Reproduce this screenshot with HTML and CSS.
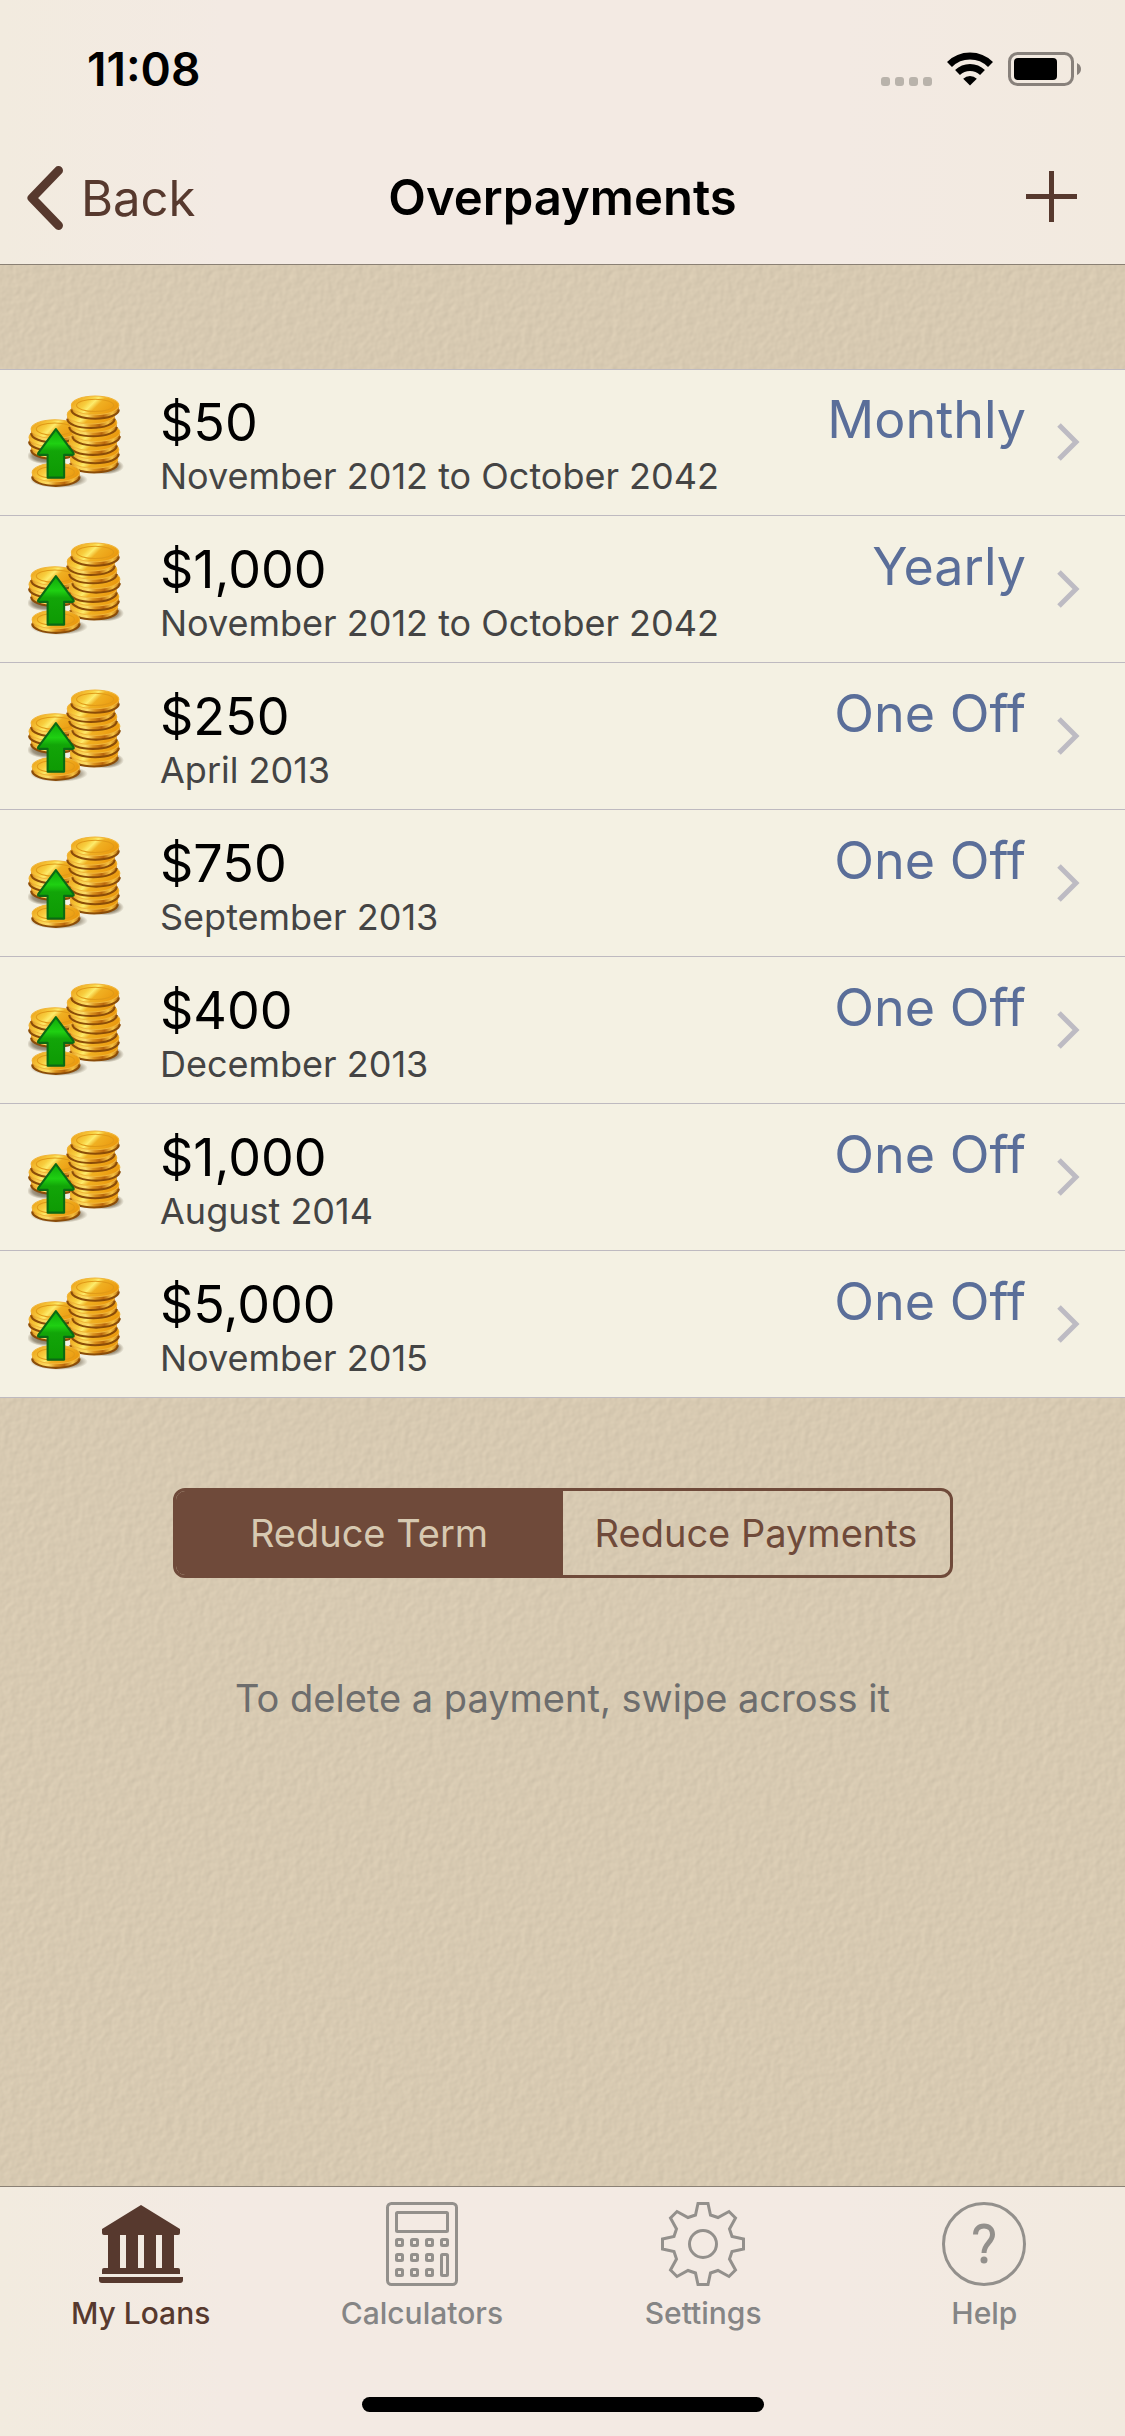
FILE: index.html
```html
<!DOCTYPE html>
<html lang="en">
<head>
<meta charset="utf-8">
<meta name="viewport" content="width=device-width, initial-scale=1">
<title>Overpayments</title>
<link rel="stylesheet" href="styles.css">
</head>
<body>
<svg class="defs" width="0" height="0" aria-hidden="true">
  <defs>
    <linearGradient id="edge" x1="0" x2="1" y1="0" y2="0">
      <stop offset="0" stop-color="#d98a14"/><stop offset=".16" stop-color="#f9cf4c"/><stop offset=".34" stop-color="#fbdc68"/>
      <stop offset=".5" stop-color="#dc921c"/><stop offset=".68" stop-color="#b8660c"/><stop offset=".86" stop-color="#f7c544"/><stop offset="1" stop-color="#b8680a"/>
    </linearGradient>
    <linearGradient id="face" x1="0" x2="1" y1=".3" y2=".7">
      <stop offset="0" stop-color="#eda31c"/><stop offset=".3" stop-color="#f8ce3e"/><stop offset=".42" stop-color="#fdec6c"/>
      <stop offset=".55" stop-color="#f0b022"/><stop offset="1" stop-color="#ea960c"/>
    </linearGradient>
    <linearGradient id="arrow" x1="0" x2="0" y1="0" y2="1">
      <stop offset="0" stop-color="#0fa808"/><stop offset=".3" stop-color="#1fd012"/><stop offset=".45" stop-color="#12a508"/><stop offset="1" stop-color="#0e9a04"/>
    </linearGradient>
    <radialGradient id="shade">
      <stop offset="0" stop-color="#4a3a20" stop-opacity=".8"/><stop offset=".7" stop-color="#4a3a20" stop-opacity=".5"/><stop offset="1" stop-color="#4a3a20" stop-opacity="0"/>
    </radialGradient>
    <g id="coin">
      <path d="M0 8v5c0 5 10 9 23 9s23-4 23-9V8z" fill="url(#edge)"/>
      <path d="M0 13c0 5 10 9 23 9s23-4 23-9" fill="none" stroke="#8a4c08" stroke-width="2"/>
      <ellipse cx="23" cy="9" rx="23" ry="9" fill="url(#face)" stroke="#f0b63a" stroke-width="1"/>
    </g>
    <symbol id="coins" viewBox="2 1 93 93">
      <ellipse cx="77" cy="71" rx="18" ry="8" fill="url(#shade)"/>
      <ellipse cx="19" cy="61" rx="18" ry="8" fill="url(#shade)"/>
      <ellipse cx="32" cy="84" rx="28" ry="8" fill="url(#shade)"/>
      <use href="#coin" x="5" y="42"/><use href="#coin" x="3" y="34"/><use href="#coin" x="5" y="26"/>
      <ellipse cx="28" cy="35" rx="18" ry="6" fill="none" stroke="#e09a18" stroke-width="1"/>
      <use href="#coin" x="43" y="55"/><use href="#coin" x="44" y="46"/><use href="#coin" x="42" y="38"/><use href="#coin" x="45" y="29"/>
      <use href="#coin" x="42" y="20"/><use href="#coin" x="40" y="12"/><use href="#coin" x="44" y="3"/>
      <ellipse cx="67" cy="12" rx="18" ry="6" fill="none" stroke="#e09a18" stroke-width="1"/>
      <use href="#coin" x="6" y="68"/>
      <ellipse cx="29" cy="77" rx="18" ry="6" fill="none" stroke="#e09a18" stroke-width="1"/>
      <path d="M29 35 46 58q1 2-1 2H37V82H21V60H13q-2 0-1-2z" fill="url(#arrow)" stroke="#0a6a14" stroke-width="2" stroke-linejoin="round"/>
    </symbol>
    <symbol id="more" viewBox="0 0 26 40">
      <path d="M3 3 20 20 3 37" fill="none" stroke="#bdbbc3" stroke-width="5"/>
    </symbol>
  </defs>
</svg>

<div class="screen">
  <header class="top">
    <div class="status">
      <time class="clock">11:08</time>
      <div class="indicators">
        <svg class="signal" viewBox="0 0 51 9" aria-hidden="true"><g fill="#b9b3ab"><rect width="9" height="9" rx="3"/><rect x="14" width="9" height="9" rx="3"/><rect x="28" width="9" height="9" rx="3"/><rect x="42" width="9" height="9" rx="3"/></g></svg>
        <svg class="wifi" viewBox="0 0 46 34" aria-hidden="true"><g fill="none" stroke="#000" stroke-width="7"><path d="M2.500 12.500a29 29 0 0 1 41 0"/><path d="M10.500 20.500a18 18 0 0 1 25 0"/></g><path d="M23 33.500 16.200 26.700a9.800 9.800 0 0 1 13.600 0z"/></svg>
        <svg class="battery" viewBox="0 0 74 34" aria-hidden="true"><rect x="1.500" y="1.500" width="63" height="31" rx="8" fill="none" stroke="#88817b" stroke-width="3"/><rect x="6" y="6" width="43" height="22" rx="4"/><path d="M69 11v12q4-2 4-6t-4-6z" fill="#88817b"/></svg>
      </div>
    </div>
    <nav class="bar">
      <a class="back" href="#back"><svg class="back-icon" viewBox="0 0 36 64" aria-hidden="true"><path d="M31.500 4.500 5 32 31.500 59.500" fill="none" stroke="#57392e" stroke-width="9" stroke-linecap="round" stroke-linejoin="round"/></svg>Back</a>
      <h1 class="title">Overpayments</h1>
      <button class="add" type="button" aria-label="Add overpayment"><svg class="add-icon" viewBox="0 0 51 51" aria-hidden="true"><path d="M0 25.500h51M25.500 0v51" stroke="#57392e" stroke-width="5"/></svg></button>
    </nav>
  </header>

  <main class="content">
    <ul class="payments">
      <li><a class="payment" href="#p1"><svg class="coins"><use href="#coins"/></svg><span class="info"><span class="amount">$50</span><span class="dates">November 2012 to October 2042</span></span><span class="kind">Monthly</span><svg class="more"><use href="#more"/></svg></a></li>
      <li><a class="payment" href="#p2"><svg class="coins"><use href="#coins"/></svg><span class="info"><span class="amount">$1,000</span><span class="dates">November 2012 to October 2042</span></span><span class="kind">Yearly</span><svg class="more"><use href="#more"/></svg></a></li>
      <li><a class="payment" href="#p3"><svg class="coins"><use href="#coins"/></svg><span class="info"><span class="amount">$250</span><span class="dates">April 2013</span></span><span class="kind">One Off</span><svg class="more"><use href="#more"/></svg></a></li>
      <li><a class="payment" href="#p4"><svg class="coins"><use href="#coins"/></svg><span class="info"><span class="amount">$750</span><span class="dates">September 2013</span></span><span class="kind">One Off</span><svg class="more"><use href="#more"/></svg></a></li>
      <li><a class="payment" href="#p5"><svg class="coins"><use href="#coins"/></svg><span class="info"><span class="amount">$400</span><span class="dates">December 2013</span></span><span class="kind">One Off</span><svg class="more"><use href="#more"/></svg></a></li>
      <li><a class="payment" href="#p6"><svg class="coins"><use href="#coins"/></svg><span class="info"><span class="amount">$1,000</span><span class="dates">August 2014</span></span><span class="kind">One Off</span><svg class="more"><use href="#more"/></svg></a></li>
      <li><a class="payment" href="#p7"><svg class="coins"><use href="#coins"/></svg><span class="info"><span class="amount">$5,000</span><span class="dates">November 2015</span></span><span class="kind">One Off</span><svg class="more"><use href="#more"/></svg></a></li>
    </ul>
    <div class="segments" role="group" aria-label="Overpayment effect">
      <button class="segment selected" type="button" aria-pressed="true">Reduce Term</button>
      <button class="segment" type="button" aria-pressed="false">Reduce Payments</button>
    </div>
    <p class="hint">To delete a payment, swipe across it</p>
  </main>

  <footer class="bottom">
    <nav class="tabs">
      <a class="tab current" href="#loans" aria-current="page">
        <svg class="tab-icon" viewBox="0 0 84 84" aria-hidden="true"><g fill="#57392e"><path d="M42 3 81 27v4q0 2-2 2H75V66h4q2 0 2 2v4H3v-4q0-2 2-2H9V33H5q-2 0-2-2v-4zM21 33V66h6V33zM39 33V66h6V33zM57 33V66h6V33z" fill-rule="evenodd"/><path d="M0 75h84v3q0 3-3 3H3q-3 0-3-3z"/></g></svg>
        My Loans</a>
      <a class="tab" href="#calculators">
        <svg class="tab-icon" viewBox="0 0 84 84" aria-hidden="true"><g fill="none" stroke="#93908c" stroke-width="3"><rect x="7.500" y="1.500" width="69" height="81" rx="4"/><rect x="16.500" y="10.500" width="51" height="19" rx="1"/>
        <g><rect x="16.500" y="37.500" width="6" height="6" rx="1"/><rect x="31.500" y="37.500" width="6" height="6" rx="1"/><rect x="46.500" y="37.500" width="6" height="6" rx="1"/><rect x="61.500" y="37.500" width="6" height="6" rx="1"/><rect x="16.500" y="52.500" width="6" height="6" rx="1"/><rect x="31.500" y="52.500" width="6" height="6" rx="1"/><rect x="46.500" y="52.500" width="6" height="6" rx="1"/><rect x="16.500" y="67.500" width="6" height="6" rx="1"/><rect x="31.500" y="67.500" width="6" height="6" rx="1"/><rect x="46.500" y="67.500" width="6" height="6" rx="1"/><rect x="61.500" y="52.500" width="6" height="21" rx="1"/></g></g></svg>
        Calculators</a>
      <a class="tab" href="#settings">
        <svg class="tab-icon" viewBox="0 0 84 84" aria-hidden="true"><g fill="none" stroke="#93908c" stroke-width="3"><path d="M37 1.500H47L49.500 13 57 15.500 68 9.500 74.500 16 68.500 27 71 34.500 82.500 37V47L71 49.500 68.500 57 74.500 68 68 74.500 57 68.500 49.500 71 47 82.500H37L34.500 71 27 68.500 16 74.500 9.500 68 15.500 57 13 49.500 1.500 47V37L13 34.500 15.500 27 9.500 16 16 9.500 27 15.500 34.500 13z"/><circle cx="42" cy="42" r="13.500"/></g></svg>
        Settings</a>
      <a class="tab" href="#help">
        <svg class="tab-icon" viewBox="0 0 84 84" aria-hidden="true"><circle cx="42" cy="42" r="40.500" fill="none" stroke="#93908c" stroke-width="3"/><path d="M33.500 32.500c0-5 3-8.500 8.500-8.500s8.500 3.500 8.500 8.500c0 8-8.500 9-8.500 18.500" fill="none" stroke="#93908c" stroke-width="5"/><circle cx="42" cy="58" r="3.500" fill="#93908c"/></svg>
        Help</a>
    </nav>
    <div class="home"></div>
  </footer>
</div>
</body>
</html>
```
FILE: styles.css
```css
* { box-sizing: border-box; }
html, body { margin: 0; height: 100%; }
body { font-family: Inter, "Liberation Sans", sans-serif; font-size: 36px; color: #000; }
a { color: inherit; text-decoration: none; }
button { font: inherit; color: inherit; background: none; border: 0; padding: 0; }
svg { display: block; flex: none; }
.defs { position: absolute; }

.screen {
  min-height: 100%;
  display: flex;
  flex-direction: column;
  background-color: #d7c9b1;
  background-image: url("data:image/svg+xml,%3Csvg xmlns='http://www.w3.org/2000/svg' width='400' height='400'%3E%3Cfilter id='p' x='0' y='0' width='100%25' height='100%25' color-interpolation-filters='sRGB'%3E%3CfeTurbulence type='fractalNoise' baseFrequency='.13' numOctaves='2' seed='4' stitchTiles='stitch'/%3E%3CfeDiffuseLighting surfaceScale='.2' lighting-color='%23fbebcf'%3E%3CfeDistantLight azimuth='215' elevation='59'/%3E%3C/feDiffuseLighting%3E%3C/filter%3E%3Crect width='400' height='400' filter='url(%23p)'/%3E%3C/svg%3E");
}

.top, .bottom { background: linear-gradient(90deg, #f2ebdf, #f3eae3 20%, #f3eae3 75%, #f2eadf); }
.top { border-bottom: 1px solid #8a8074; }
.status { height: 132px; padding: 0 43px 0 87px; display: flex; align-items: center; justify-content: space-between; }
.clock { font-size: 46px; font-weight: 600; line-height: 52px; margin-top: 6px; }
.indicators { display: flex; align-items: flex-end; padding-top: 6px; }
.signal { width: 51px; height: 9px; margin-right: 15px; }
.wifi { width: 46px; height: 34px; margin-right: 15px; }
.battery { width: 74px; height: 34px; }

.bar { height: 132px; padding: 0 27px; display: grid; grid-template-columns: 1fr auto 1fr; align-items: center; }
.back { display: flex; align-items: center; gap: 18px; font-size: 49px; color: #57392e; }
.back-icon { width: 36px; height: 64px; }
.title { margin: 0; font-size: 49px; font-weight: 600; line-height: 60px; }
.add { justify-self: end; margin-right: 21px; padding-bottom: 3px; }
.add-icon { width: 51px; height: 51px; }

.content { flex: 1; padding-top: 104px; }
.payments { margin: 0; padding: 0; list-style: none; background: #f4f1e3; box-shadow: inset 0 1px #bebac0; }
.payments li { height: 147px; border-bottom: 1px solid #bebac0; }
.payment { height: 100%; display: flex; align-items: flex-start; padding: 0 43px 0 28px; }
.coins { width: 96px; height: 96px; margin-top: 25px; }
.info { flex: 1; display: flex; flex-direction: column; padding: 22px 0 0 36px; }
.amount { font-size: 52px; line-height: 64px; }
.dates { font-size: 36px; line-height: 42px; color: #444; }
.kind { font-size: 52px; line-height: 64px; padding-top: 19px; margin-right: 30px; color: #5a6e99; }
.more { width: 26px; height: 40px; align-self: center; }

.segments { width: 780px; max-width: 90%; height: 90px; margin: 90px auto 0; display: grid; grid-template-columns: 1fr 1fr; border: 3px solid #6f4a3a; border-radius: 12px; overflow: hidden; font-size: 38px; color: #6f4a3a; }
.selected { background: #6f4a3a; color: #d7c9b1; }
.hint { margin: 96px 0 0; text-align: center; font-size: 38px; line-height: 48px; color: #6d6d6d; }

.bottom { border-top: 1px solid #8a8074; }
.tabs { display: grid; grid-template-columns: repeat(4, 1fr); }
.tab { display: flex; flex-direction: column; align-items: center; gap: 9px; padding-top: 15px; font-size: 30px; line-height: 36px; font-weight: 500; color: #858585; }
.current { color: #57392e; }
.tab-icon { width: 84px; height: 84px; }
.home { width: 402px; height: 15px; margin: 66px auto 24px; border-radius: 8px; background: #000; }
```
